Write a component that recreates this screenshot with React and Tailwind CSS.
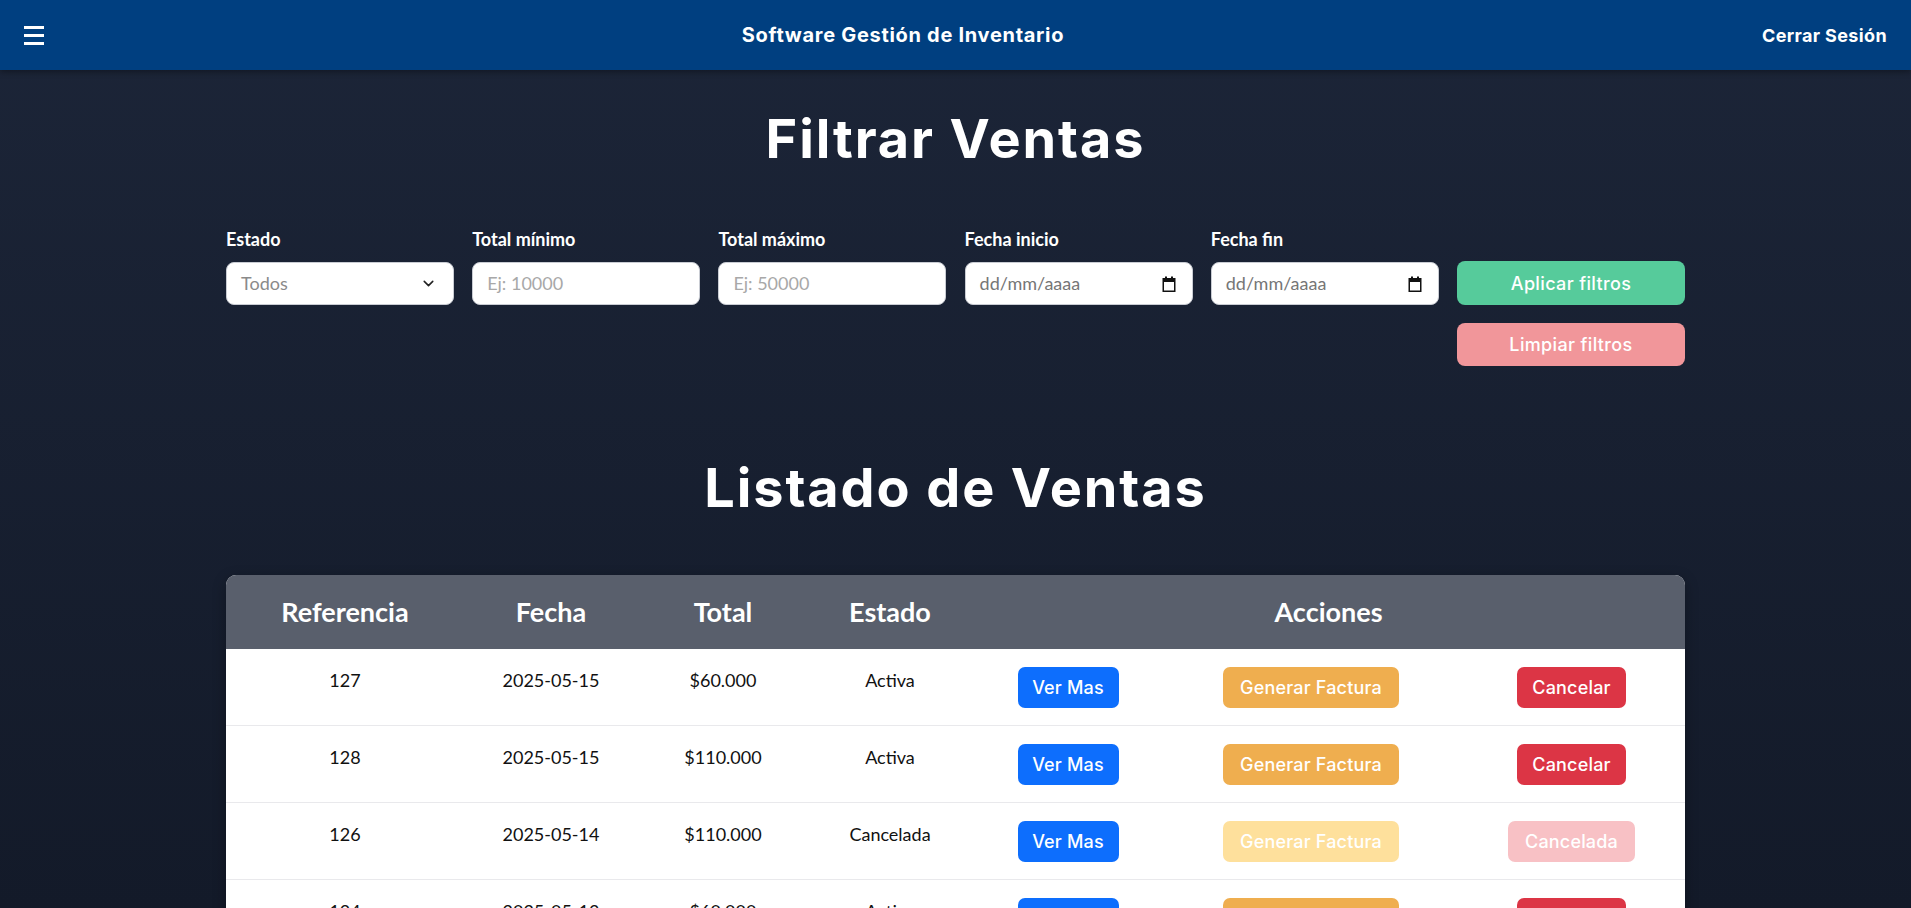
import React from "react";

const rows = [
  { ref: "127", fecha: "2025-05-15", total: "$60.000", estado: "Activa", cancelada: false },
  { ref: "128", fecha: "2025-05-15", total: "$110.000", estado: "Activa", cancelada: false },
  { ref: "126", fecha: "2025-05-14", total: "$110.000", estado: "Cancelada", cancelada: true },
  { ref: "124", fecha: "2025-05-13", total: "$60.000", estado: "Activa", cancelada: false },
  { ref: "123", fecha: "2025-05-12", total: "$45.000", estado: "Activa", cancelada: false },
];

const head = { fontFamily: "Inter, 'Open Sans', sans-serif" };
const body = { fontFamily: "Lato, 'Noto Sans', sans-serif" };

function CalendarIcon() {
  return (
    <svg width="14" height="16" viewBox="0 0 14 16" aria-hidden="true">
      <rect x="3" y="0.5" width="2" height="3" fill="#111" />
      <rect x="9" y="0.5" width="2" height="3" fill="#111" />
      <rect x="1.25" y="2.75" width="11.5" height="12.5" fill="none" stroke="#111" strokeWidth="1.5" />
      <rect x="1" y="2.5" width="12" height="3.5" fill="#111" />
    </svg>
  );
}

function Chevron() {
  return (
    <svg width="17" height="17" viewBox="0 0 24 24" fill="none" stroke="#222" strokeWidth="2.2" strokeLinecap="round" strokeLinejoin="round" aria-hidden="true">
      <path d="M6 9l6 6 6-6" />
    </svg>
  );
}

function Field({ label, children }) {
  return (
    <div className="flex flex-col">
      <div className="h-[24px] mb-[11px] text-[18px] leading-[24px] font-bold text-white" style={body}>{label}</div>
      {children}
    </div>
  );
}

function Box({ children }) {
  return (
    <div className="h-[43px] bg-white rounded-[8px] border border-[#c9ccd3] flex items-center justify-between pl-[14px] pr-[16px] text-[18px]" style={body}>
      {children}
    </div>
  );
}

function ActionBtn({ label, className }) {
  return (
    <div
      className={"h-[41px] rounded-[7px] flex items-center justify-center text-white text-[18px] font-medium tracking-[0.01em] " + className}
      style={head}
    >
      {label}
    </div>
  );
}

const grid = "grid grid-cols-[238px_174px_170px_164px_192px_294px_227px]";

export default function App() {
  return (
    <div className="h-screen overflow-hidden bg-gradient-to-b from-[#1c2538] to-[#131a29]">
      <nav className="h-[70px] bg-[#003f80] flex items-center justify-between pl-[24px] pr-[24px] shadow-[0_2px_6px_rgba(0,0,0,0.35)]">
        <div className="w-[20px] flex flex-col gap-[5px]">
          <div className="h-[3px] bg-white" />
          <div className="h-[3px] bg-white" />
          <div className="h-[3px] bg-white" />
        </div>
        <div className="text-white text-[20px] font-bold tracking-[0.035em]" style={head}>Software Gestión de Inventario</div>
        <div className="text-white text-[18px] font-bold tracking-[0.02em]" style={head}>Cerrar Sesión</div>
      </nav>

      <main className="w-[1459px] mx-auto">
        <h1 className="mt-[36px] text-center text-white text-[54px] leading-[65px] font-bold tracking-[0.035em]" style={head}>
          Filtrar Ventas
        </h1>

        <div className="mt-[56px] grid grid-cols-6 gap-x-[18.2px] items-start">
          <Field label="Estado">
            <Box>
              <span className="text-[#8a8a8a]">Todos</span>
              <Chevron />
            </Box>
          </Field>
          <Field label="Total mínimo">
            <Box>
              <span className="text-[#a8a8a8]">Ej: 10000</span>
            </Box>
          </Field>
          <Field label="Total máximo">
            <Box>
              <span className="text-[#a8a8a8]">Ej: 50000</span>
            </Box>
          </Field>
          <Field label="Fecha inicio">
            <Box>
              <span className="text-[#767676]">dd/mm/aaaa</span>
              <CalendarIcon />
            </Box>
          </Field>
          <Field label="Fecha fin">
            <Box>
              <span className="text-[#767676]">dd/mm/aaaa</span>
              <CalendarIcon />
            </Box>
          </Field>
          <div className="mt-[34px] flex flex-col gap-[18px]">
            <div className="h-[44px] rounded-[8px] bg-[#56cb9b] flex items-center justify-center text-white text-[18px] font-medium tracking-[0.02em]" style={head}>
              Aplicar filtros
            </div>
            <div className="h-[43px] rounded-[8px] bg-[#f1969a] flex items-center justify-center text-white text-[18px] font-medium tracking-[0.02em]" style={head}>
              Limpiar filtros
            </div>
          </div>
        </div>

        <h2 className="mt-[89px] text-center text-white text-[54px] leading-[65px] font-bold tracking-[0.035em]" style={head}>
          Listado de Ventas
        </h2>

        <div className="mt-[55px] rounded-[10px] overflow-hidden bg-white shadow-[0_4px_14px_rgba(0,0,0,0.3)]">
          <div className={grid + " h-[74px] bg-[#595f6c] items-center text-white text-[27px] font-bold"} style={body}>
            <div className="text-center">Referencia</div>
            <div className="text-center">Fecha</div>
            <div className="text-center">Total</div>
            <div className="text-center">Estado</div>
            <div className="col-span-3 text-center">Acciones</div>
          </div>
          {rows.map((r) => (
            <div key={r.ref} className={grid + " h-[77px] border-b border-[#e9e9ec] items-start pt-[18px] text-[18px] leading-[27px] text-[#111]"} style={body}>
              <div className="text-center">{r.ref}</div>
              <div className="text-center">{r.fecha}</div>
              <div className="text-center">{r.total}</div>
              <div className="text-center">{r.estado}</div>
              <div className="flex justify-center">
                <ActionBtn label="Ver Mas" className="w-[101px] bg-[#0d6efd]" />
              </div>
              <div className="flex justify-center">
                <ActionBtn
                  label="Generar Factura"
                  className={"w-[176px] " + (r.cancelada ? "bg-[#fee09c]" : "bg-[#efae4f]")}
                />
              </div>
              <div className="flex justify-center">
                {r.cancelada ? (
                  <ActionBtn label="Cancelada" className="w-[127px] bg-[#f8c1c5]" />
                ) : (
                  <ActionBtn label="Cancelar" className="w-[109px] bg-[#dc3545]" />
                )}
              </div>
            </div>
          ))}
        </div>
      </main>
    </div>
  );
}
